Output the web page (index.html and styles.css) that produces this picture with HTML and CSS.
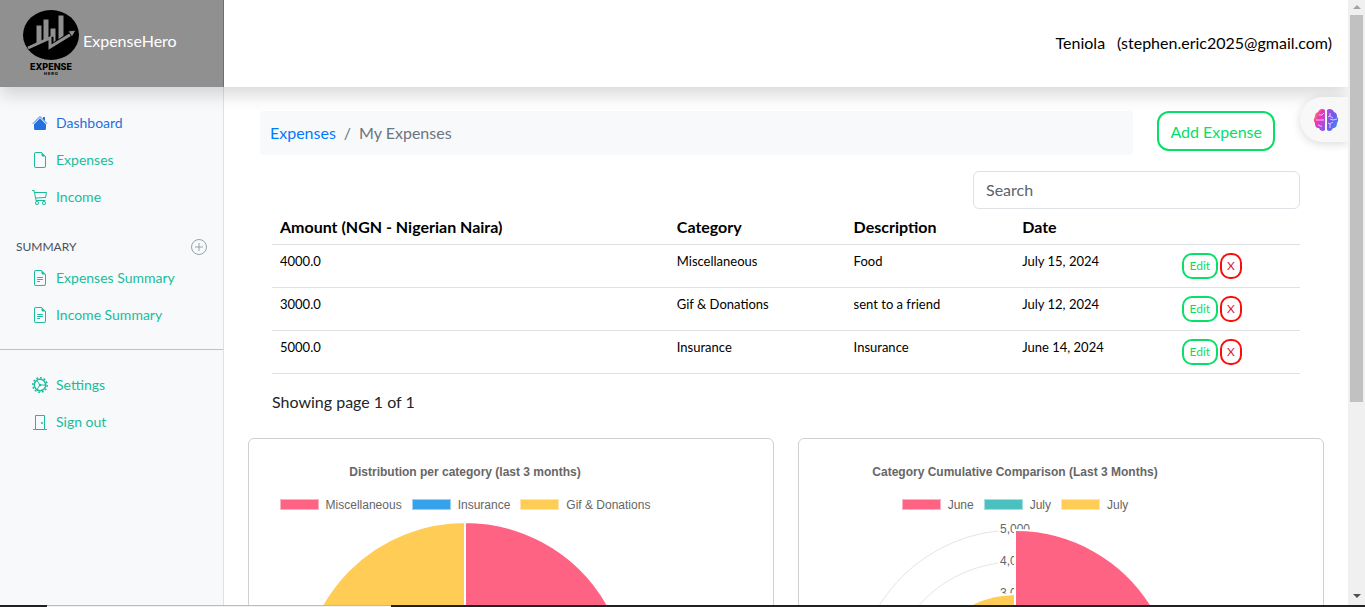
FILE: index.html
```html
<!DOCTYPE html>
<html lang="en">
<head>
<meta charset="utf-8">
<meta name="viewport" content="width=device-width, initial-scale=1">
<title>ExpenseHero - My Expenses</title>
<link rel="stylesheet" href="styles.css">
</head>
<body>
<div class="screen">
  <div class="app">
    <header class="topbar">
      <a class="brand" href="#">
        <svg class="brand-logo" width="60" height="70" viewBox="0 -2 60 70" role="img" aria-label="Expense Hero logo">
          <ellipse cx="30" cy="27" rx="28" ry="25"/>
          <g class="logo-mark">
            <path d="M15 17h6v16l-6 3zM22 11h6v19l-6 3zM29 20h6v13l-3 2v-6l-3 1zM37 7h6v21l-6 4z"/>
            <path class="logo-line" d="M7 40l22-10v9l23-14"/>
            <path d="M47 23l8-1-4 7z"/>
          </g>
          <text class="logo-name" x="30" y="62" text-anchor="middle">EXPENSE</text>
          <text class="logo-sub" x="30" y="67" text-anchor="middle">H E R O</text>
        </svg>
        <span>ExpenseHero</span>
      </a>
      <div class="account"><span>Teniola</span><span>(stephen.eric2025@gmail.com)</span></div>
    </header>

    <div class="body">
      <nav class="sidebar" aria-label="Main">
        <ul class="menu">
          <li><a class="menu-link active" href="#"><svg class="icon" viewBox="0 0 16 16"><path d="M8 3.3l6 6v4.2a1.5 1.5 0 0 1-1.500 1.500h-9A1.500 1.500 0 0 1 2 13.500V9.300zM13 2.500V6l-2-2V2.500a.5.5 0 0 1 .5-.5h1a.5.5 0 0 1 .5.5z"/><path opacity=".7" d="M7.293 1.500a1 1 0 0 1 1.414 0l6.647 6.646a.5.5 0 0 1-.708.708L8 2.207 1.354 8.854a.5.5 0 1 1-.708-.708z"/></svg>Dashboard</a></li>
          <li><a class="menu-link" href="#"><svg class="icon" viewBox="0 0 16 16"><path d="M14 4.500V14a2 2 0 0 1-2 2H4a2 2 0 0 1-2-2V2a2 2 0 0 1 2-2h5.500zm-3 0A1.500 1.500 0 0 1 9.500 3V1H4a1 1 0 0 0-1 1v12a1 1 0 0 0 1 1h8a1 1 0 0 0 1-1V4.500z"/></svg>Expenses</a></li>
          <li><a class="menu-link" href="#"><svg class="icon" viewBox="0 0 16 16"><path d="M0 1.500A.5.5 0 0 1 .5 1H2a.5.5 0 0 1 .485.379L2.890 3H14.500a.5.5 0 0 1 .49.598l-1 5a.5.5 0 0 1-.465.401l-9.397.472L4.415 11H13a.5.5 0 0 1 0 1H4a.5.5 0 0 1-.491-.408L2.010 3.607 1.610 2H.5a.5.5 0 0 1-.5-.5zM3.102 4l.84 4.479 9.144-.459L13.890 4zM5 12a2 2 0 1 0 0 4 2 2 0 0 0 0-4zm7 0a2 2 0 1 0 0 4 2 2 0 0 0 0-4zm-7 1a1 1 0 1 1 0 2 1 1 0 0 1 0-2zm7 0a1 1 0 1 1 0 2 1 1 0 0 1 0-2z"/></svg>Income</a></li>
        </ul>
        <div class="menu-heading">
          <span>SUMMARY</span>
          <button class="plus" type="button" aria-label="Add a summary"><svg class="icon" viewBox="0 0 16 16"><circle class="thin" cx="8" cy="8" r="7.500"/><path class="thin" d="M8 4v8M4 8h8"/></svg></button>
        </div>
        <ul class="menu">
          <li><a class="menu-link" href="#"><svg class="icon" viewBox="0 0 16 16"><path d="M5.500 7a.5.5 0 0 0 0 1h5a.5.5 0 0 0 0-1zM5 9.500a.5.5 0 0 1 .5-.5h5a.5.5 0 0 1 0 1h-5a.5.5 0 0 1-.5-.5zm0 2a.5.5 0 0 1 .5-.5h2a.5.5 0 0 1 0 1h-2a.5.5 0 0 1-.5-.5z"/><path d="M9.500 0H4a2 2 0 0 0-2 2v12a2 2 0 0 0 2 2h8a2 2 0 0 0 2-2V4.500zm0 1v2A1.500 1.500 0 0 0 11 4.500h2V14a1 1 0 0 1-1 1H4a1 1 0 0 1-1-1V2a1 1 0 0 1 1-1z"/></svg>Expenses Summary</a></li>
          <li><a class="menu-link" href="#"><svg class="icon" viewBox="0 0 16 16"><path d="M5.500 7a.5.5 0 0 0 0 1h5a.5.5 0 0 0 0-1zM5 9.500a.5.5 0 0 1 .5-.5h5a.5.5 0 0 1 0 1h-5a.5.5 0 0 1-.5-.5zm0 2a.5.5 0 0 1 .5-.5h2a.5.5 0 0 1 0 1h-2a.5.5 0 0 1-.5-.5z"/><path d="M9.500 0H4a2 2 0 0 0-2 2v12a2 2 0 0 0 2 2h8a2 2 0 0 0 2-2V4.500zm0 1v2A1.500 1.500 0 0 0 11 4.500h2V14a1 1 0 0 1-1 1H4a1 1 0 0 1-1-1V2a1 1 0 0 1 1-1z"/></svg>Income Summary</a></li>
        </ul>
        <hr class="rule">
        <ul class="menu">
          <li><a class="menu-link" href="#"><svg class="icon" viewBox="0 0 16 16"><circle class="gear-ring" cx="8" cy="8" r="5.700"/><circle class="gear-teeth" cx="8" cy="8" r="7.200" pathLength="24"/><path class="thin" d="M8 8h5.500M8 8L5 3.500M8 8l-3 4.500"/><circle cx="8" cy="8" r="1.300"/></svg>Settings</a></li>
          <li><a class="menu-link" href="#"><svg class="icon" viewBox="0 0 16 16"><path d="M3 2a1 1 0 0 1 1-1h8a1 1 0 0 1 1 1v13h1.500a.5.5 0 0 1 0 1h-13a.5.5 0 0 1 0-1H3zm1 13h8V2H4z"/><circle cx="10" cy="9" r="1"/></svg>Sign out</a></li>
        </ul>
      </nav>

      <main class="content">
        <div class="page-head">
          <nav class="breadcrumb" aria-label="Breadcrumb"><a href="#">Expenses</a><span>/</span><span>My Expenses</span></nav>
          <button class="btn-add" type="button">Add Expense</button>
        </div>
        <section class="listing">
          <input class="search" type="text" placeholder="Search" aria-label="Search">
          <table class="expenses">
            <colgroup><col class="c-amount"><col class="c-category"><col class="c-description"><col class="c-date"><col></colgroup>
            <thead>
              <tr><th>Amount (NGN - Nigerian Naira)</th><th>Category</th><th>Description</th><th>Date</th><th></th></tr>
            </thead>
            <tbody>
              <tr><td>4000.0</td><td>Miscellaneous</td><td>Food</td><td>July 15, 2024</td><td><div class="actions"><button class="btn-edit" type="button">Edit</button><button class="btn-delete" type="button">X</button></div></td></tr>
              <tr><td>3000.0</td><td>Gif &amp; Donations</td><td>sent to a friend</td><td>July 12, 2024</td><td><div class="actions"><button class="btn-edit" type="button">Edit</button><button class="btn-delete" type="button">X</button></div></td></tr>
              <tr><td>5000.0</td><td>Insurance</td><td>Insurance</td><td>June 14, 2024</td><td><div class="actions"><button class="btn-edit" type="button">Edit</button><button class="btn-delete" type="button">X</button></div></td></tr>
            </tbody>
          </table>
          <p class="paging">Showing page 1 of 1</p>
        </section>

        <div class="charts">
          <section class="card">
            <div class="chart">
              <h2 class="chart-title">Distribution per category (last 3 months)</h2>
              <ul class="legend">
                <li><i class="swatch pink"></i>Miscellaneous</li>
                <li><i class="swatch blue"></i>Insurance</li>
                <li><i class="swatch yellow"></i>Gif &amp; Donations</li>
              </ul>
              <svg class="plot" width="400" height="340" viewBox="0 0 400 340" role="img" aria-label="Expenses by category">
                <g class="slices">
                  <path class="pink" d="M200 171V7A164 164 0 0 1 342 253z"/>
                  <path class="blue" d="M200 171L342 253A164 164 0 0 1 36 171z"/>
                  <path class="yellow" d="M200 171H36A164 164 0 0 1 200 7z"/>
                </g>
              </svg>
            </div>
          </section>
          <section class="card">
            <div class="chart">
              <h2 class="chart-title">Category Cumulative Comparison (Last 3 Months)</h2>
              <ul class="legend">
                <li><i class="swatch pink"></i>June</li>
                <li><i class="swatch teal"></i>July</li>
                <li><i class="swatch yellow"></i>July</li>
              </ul>
              <svg class="plot" width="400" height="340" viewBox="0 0 400 340" role="img" aria-label="Cumulative comparison by month">
                <g class="rings"><circle cx="200" cy="175" r="160"/><circle cx="200" cy="175" r="128"/><circle cx="200" cy="175" r="96"/><circle cx="200" cy="175" r="64"/><circle cx="200" cy="175" r="32"/></g>
                <path class="tick-back" d="M183 6h34v16h-34zM183 38h34v16h-34zM183 70h34v16h-34z"/>
                <g class="ticks" text-anchor="middle"><text x="200" y="18">5,000</text><text x="200" y="50">4,000</text><text x="200" y="82">3,000</text></g>
                <g class="slices">
                  <path class="pink" d="M200 175V15A160 160 0 0 1 339 255z"/>
                  <path class="teal" d="M200 175L311 239A128 128 0 0 1 89 239z"/>
                  <path class="yellow" d="M200 175L117 223A96 96 0 0 1 200 79z"/>
                </g>
              </svg>
            </div>
          </section>
        </div>
      </main>
    </div>
    <button class="assistant" type="button" aria-label="Open assistant">
      <svg width="26" height="24" viewBox="0 0 26 24">
        <defs>
          <linearGradient id="warm" x1="0" y1="0" x2="1" y2="1"><stop offset="0" stop-color="#ffa33a"/><stop offset=".1" stop-color="#ff9a3c"/><stop offset=".4" stop-color="#f034b8"/><stop offset="1" stop-color="#7a5cf5"/></linearGradient>
          <linearGradient id="cool" x1="0" y1="0" x2="1" y2="1"><stop offset="0" stop-color="#b545e6"/><stop offset=".5" stop-color="#6d5cf0"/><stop offset="1" stop-color="#2f9cf5"/></linearGradient>
        </defs>
        <path fill="url(#warm)" d="M12 2C10 0 6 1 5 4 2 5 2 7 2 9 0 11 1 14 2 15c0 3 1 5 4 5 1 3 4 4 6 2z"/>
        <path fill="url(#cool)" d="M14 2c2-2 6-1 7 2 3 1 3 3 3 5 2 2 1 5 0 6 0 3-1 5-4 5-1 3-4 4-6 2z"/>
        <path class="folds" d="M3 12h8M6 7h3l2-2M5 17c2 0 2 2 4 1M17 5v3l3 2M17 8l-2 1M24 11l-4 1-3-1M17 20v-4l3-2M17 16l-2-1"/>
      </svg>
    </button>
  </div>

  <div class="scrollbar" aria-hidden="true">
    <svg width="17" height="15" viewBox="0 0 17 15"><path class="arrow-up" d="M5 9l4-4 4 4z"/></svg>
    <div class="track"><div class="thumb"></div></div>
    <svg width="17" height="15" viewBox="0 0 17 15"><path class="arrow-down" d="M5 4h8l-4 4z"/></svg>
  </div>
  <div class="edge" aria-hidden="true"><div class="edge-tab"></div></div>
</div>
</body>
</html>
```
FILE: styles.css
```css
*, *::before, *::after { box-sizing: border-box; }

body {
  margin: 0;
  font-family: Lato, "Liberation Sans", sans-serif;
  font-size: 16px;
  line-height: 24px;
  color: #000;
  background: #fff;
}

ul { list-style: none; margin: 0; padding: 0; }
a { text-decoration: none; }
button { font-family: inherit; cursor: pointer; }

.screen {
  display: grid;
  grid-template-columns: minmax(0, 1fr) 17px;
  grid-template-rows: minmax(0, 1fr) 2px;
  height: 100vh;
  overflow: hidden;
}

.app {
  position: relative;
  display: flex;
  flex-direction: column;
  min-height: 0;
  overflow: hidden;
}

/* Top bar */
.topbar {
  position: relative;
  z-index: 1;
  display: flex;
  flex: none;
  height: 87px;
  background: #fff;
  box-shadow: 0 8px 16px rgba(0, 0, 0, .15);
}
.brand {
  display: flex;
  align-items: center;
  gap: 2px;
  width: 224px;
  padding: 0 0 6px 21px;
  color: #fff;
  background: #909090;
  border-right: 1px solid #6e6e6e;
}
.logo-mark { fill: #909090; stroke: #000; stroke-width: 1; }
.logo-mark .logo-line { fill: none; stroke: #909090; stroke-width: 3; }
.logo-name { font: 800 9px Inter, sans-serif; }
.logo-sub { font: 800 4px Inter, sans-serif; }
.account {
  display: flex;
  flex: 1;
  align-items: center;
  justify-content: flex-end;
  gap: 12px;
  padding: 0 16px 2px 0;
}

.body {
  display: grid;
  grid-template-columns: 224px minmax(0, 1fr);
  flex: 1;
  min-height: 0;
}

/* Sidebar */
.sidebar {
  padding-top: 17px;
  background: #f8f9fb;
  border-right: 1px solid #dee2e6;
}
.menu-link {
  display: flex;
  align-items: center;
  gap: 8px;
  height: 37px;
  padding: 0 32px;
  font-size: 14px;
  color: #1abc9c;
}
.menu-link.active { color: #2470dc; }
.icon { display: block; flex: none; width: 16px; height: 16px; fill: currentColor; }
.thin { fill: none; stroke: currentColor; stroke-width: 1; }
.gear-ring { fill: none; stroke: currentColor; stroke-width: 1.5; }
.gear-teeth { fill: none; stroke: currentColor; stroke-width: 1.5; stroke-dasharray: 1 1; }
.menu-heading {
  display: flex;
  align-items: center;
  justify-content: space-between;
  height: 24px;
  margin-top: 20px;
  padding: 0 16px;
  font-size: 12px;
  color: #495057;
}
.plus { padding: 0; color: #95a5a6; background: none; border: 0; }
.rule { margin: 16px 0; border: 0; border-top: 1px solid #bfc2c5; }

/* Content */
.content { min-width: 0; padding: 24px 24px 0; }
.page-head {
  display: flex;
  align-items: flex-start;
  gap: 24px;
  padding: 0 49px 0 12px;
}
.breadcrumb {
  display: flex;
  flex: 1;
  gap: 8px;
  padding: 10px;
  color: #6c757d;
  background: #f8f9fb;
  border-radius: 4px;
}
.breadcrumb a { color: #007bff; }
.btn-add {
  height: 40px;
  padding: 0 11px;
  font-size: 16px;
  color: #08de68;
  background: #fff;
  border: 2px solid #08de68;
  border-radius: 12px;
}

.listing { display: flex; flex-direction: column; padding: 16px 24px 0; }
.search {
  align-self: flex-end;
  width: 327px;
  height: 38px;
  padding: 0 12px 2px;
  font: inherit;
  background: #fff;
  border: 1px solid #dee2e6;
  border-radius: 6px;
}
.search::placeholder { color: #5c636a; opacity: 1; }

.expenses {
  width: 100%;
  margin-top: 1px;
  border-collapse: collapse;
  table-layout: fixed;
}
.c-amount { width: 38.6%; }
.c-category { width: 17.2%; }
.c-description { width: 16.4%; }
.c-date { width: 15.5%; }
.expenses th {
  height: 34px;
  padding: 0 8px;
  text-align: left;
  font-weight: 700;
  border-bottom: 1px solid #dee2e6;
}
.expenses td {
  height: 43px;
  padding: 8px;
  font-size: 13px;
  line-height: 16px;
  vertical-align: top;
  border-bottom: 1px solid #dee2e6;
}
.actions { display: flex; gap: 2px; }
.btn-edit,
.btn-delete {
  height: 26px;
  padding: 0 6px;
  font-size: 12px;
  background: #fff;
  border: 2px solid;
  border-radius: 10px;
}
.btn-edit { color: #08de68; border-color: #08de68; }
.btn-delete { padding: 0 5px; color: #dc143c; border-color: #fb0d0d; }
.paging { margin: 16px 0 24px; color: #212529; }

/* Charts */
.charts { display: grid; grid-template-columns: 1fr 1fr; gap: 24px; }
.card { padding: 16px; border: 1px solid #d0d0d0; border-radius: 6px; }
.chart {
  max-width: 400px;
  font: 12px/16px "Liberation Sans", Arial, sans-serif;
  color: #666;
}
.chart-title {
  margin: 0;
  padding: 9px 0;
  text-align: center;
  font-size: 12px;
  font-weight: 700;
}
.legend { display: flex; justify-content: center; gap: 10px; padding: 8px 0 2px; }
.legend li { display: flex; align-items: center; gap: 7px; }
.swatch {
  width: 39px;
  height: 11px;
  border: 1px solid rgba(255, 255, 255, .5);
}
.plot { display: block; max-width: 100%; }
.pink { fill: #ff6384; background-color: #ff6384; }
.blue { fill: #36a2eb; background-color: #36a2eb; }
.yellow { fill: #ffcd56; background-color: #ffcd56; }
.teal { fill: #4bc0c0; background-color: #4bc0c0; }
.slices { stroke: #fff; stroke-width: 2; }
.rings { fill: none; stroke: #e5e5e5; }
.tick-back { fill: #fff; }
.ticks { fill: #666; }

/* Floating assistant tab */
.assistant {
  position: absolute;
  z-index: 2;
  top: 97px;
  right: 0;
  display: flex;
  align-items: center;
  width: 48px;
  height: 45px;
  padding: 0 0 0 13px;
  background: #f8f8f8;
  border: 0;
  border-radius: 23px 0 0 23px;
  box-shadow: 0 2px 10px rgba(0, 0, 0, .15);
}
.folds { fill: none; stroke: #fff; stroke-width: 1; opacity: .7; }

/* Scroll bar and window edge */
.scrollbar { display: flex; flex-direction: column; background: #f0f0f0; }
.scrollbar svg { display: block; flex: none; }
.track { flex: 1; padding: 0 2px; }
.thumb { height: 67.3%; background: #c1c1c1; }
.arrow-up { fill: #a3a3a3; }
.arrow-down { fill: #505050; }
.edge { grid-column: 1 / -1; padding-left: 47px; background: #202124; }
.edge-tab { width: 344px; height: 2px; background: #f2f2f2; border-top: 1px solid #bbb; }
```
